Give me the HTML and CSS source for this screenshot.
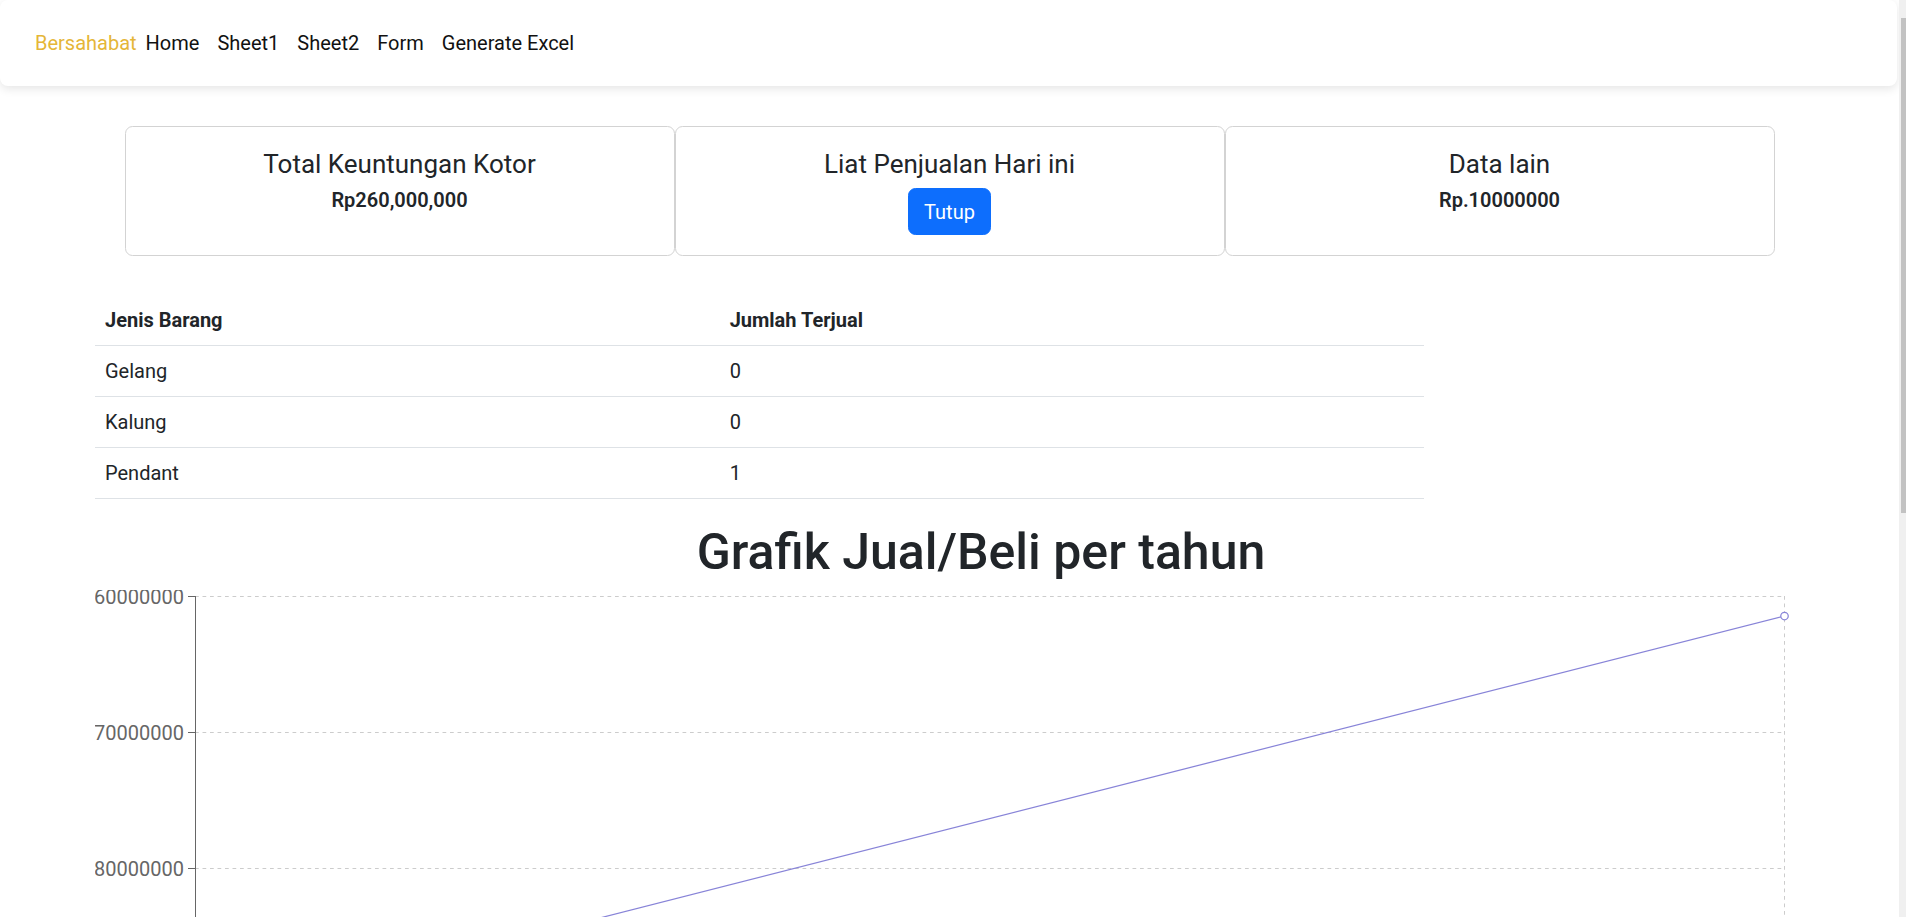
FILE: index.html
```html
<!DOCTYPE html>
<html lang="id">
<head>
<meta charset="utf-8">
<title>Bersahabat</title>
<link rel="stylesheet" href="styles.css">
</head>
<body>
<nav class="navbar">
  <a class="brand" href="#">Bersahabat</a>
  <ul class="nav-links">
    <li><a href="#">Home</a></li>
    <li><a href="#">Sheet1</a></li>
    <li><a href="#">Sheet2</a></li>
    <li><a href="#">Form</a></li>
    <li><a href="#">Generate Excel</a></li>
  </ul>
</nav>
<main class="page">
  <section class="cards">
    <div class="card">
      <h5 class="card-title">Total Keuntungan Kotor</h5>
      <h6 class="card-value">Rp260,000,000</h6>
    </div>
    <div class="card">
      <h5 class="card-title">Liat Penjualan Hari ini</h5>
      <button class="btn" type="button">Tutup</button>
    </div>
    <div class="card">
      <h5 class="card-title">Data lain</h5>
      <h6 class="card-value">Rp.10000000</h6>
    </div>
  </section>
  <section class="content">
    <table class="table">
      <thead>
        <tr><th class="col-name">Jenis Barang</th><th>Jumlah Terjual</th></tr>
      </thead>
      <tbody>
        <tr><td>Gelang</td><td>0</td></tr>
        <tr><td>Kalung</td><td>0</td></tr>
        <tr><td>Pendant</td><td>1</td></tr>
      </tbody>
    </table>
    <h1 class="chart-title">Grafik Jual/Beli per tahun</h1>
    <svg class="chart" width="1772" height="600" viewBox="0 0 1772 600">
      <g class="grid">
        <line x1="100" y1="6.5" x2="1689" y2="6.5"/>
        <line x1="100" y1="142.5" x2="1689" y2="142.5"/>
        <line x1="100" y1="278.5" x2="1689" y2="278.5"/>
        <line x1="100" y1="414.5" x2="1689" y2="414.5"/>
        <line x1="100" y1="550.5" x2="1689" y2="550.5"/>
        <line x1="100.5" y1="6" x2="100.5" y2="551"/>
        <line x1="1689.5" y1="6" x2="1689.5" y2="551"/>
      </g>
      <g class="axis">
        <line x1="100.5" y1="6" x2="100.5" y2="551"/>
        <line x1="100" y1="550.5" x2="1690" y2="550.5"/>
        <line x1="93" y1="6.5" x2="100" y2="6.5"/>
        <line x1="93" y1="142.5" x2="100" y2="142.5"/>
        <line x1="93" y1="278.5" x2="100" y2="278.5"/>
        <line x1="93" y1="414.5" x2="100" y2="414.5"/>
        <line x1="93" y1="550.5" x2="100" y2="550.5"/>
        <line x1="100.5" y1="551" x2="100.5" y2="558"/>
        <line x1="1689.5" y1="551" x2="1689.5" y2="558"/>
      </g>
      <g class="tick-labels">
        <text x="89" y="6.5" dy="0.35em" text-anchor="end">360000000</text>
        <text x="89" y="142.5" dy="0.35em" text-anchor="end">270000000</text>
        <text x="89" y="278.5" dy="0.35em" text-anchor="end">180000000</text>
        <text x="89" y="414.5" dy="0.35em" text-anchor="end">90000000</text>
        <text x="89" y="550.5" dy="0.35em" text-anchor="end">0</text>
        <text x="100" y="582" text-anchor="middle">2023</text>
        <text x="1689" y="582" text-anchor="middle">2024</text>
      </g>
      <path class="series" d="M100.5,431 L1689.5,26"/>
      <circle class="dot" cx="100.5" cy="431" r="3.75"/>
      <circle class="dot" cx="1689.5" cy="26" r="3.75"/>
    </svg>
  </section>
</main>
<div class="scroll-thumb" aria-hidden="true"></div>
</body>
</html>
```
FILE: styles.css
```css
body {
  margin: 0;
  border-right: 7px solid #f0f0f0;
  font-family: Roboto, "Noto Sans", "Liberation Sans", sans-serif;
  font-size: 20px;
  line-height: 1.5;
  color: #212529;
  background: #fff;
}

.scroll-thumb {
  position: fixed;
  top: 18px;
  right: 0;
  width: 5px;
  height: 495px;
  background: #c2c2c2;
}

a {
  text-decoration: none;
}

.navbar {
  display: flex;
  align-items: center;
  height: 86px;
  padding-left: 35px;
  margin-right: 2px;
  background: #fff;
  border-radius: 8px;
  box-shadow: 0 3px 10px rgba(0, 0, 0, 0.1);
}
.brand {
  color: #e5b638;
  line-height: 30px;
}
.nav-links {
  display: flex;
  list-style: none;
  margin: 0;
  padding: 0;
}
.nav-links a {
  display: block;
  padding: 0 9px;
  line-height: 30px;
  color: #111;
}

.page {
  padding-bottom: 510px;
}

.cards {
  display: flex;
  width: 1650px;
  margin: 40px auto 0;
}
.card {
  flex: 1;
  border: 1px solid #d3d3d3;
  border-radius: 7.5px;
  padding: 22px 20px 20px;
  text-align: center;
}
.card-title {
  margin: 0 0 9px;
  font-size: 26px;
  line-height: 30px;
  font-weight: 400;
}
.card-value {
  margin: 0;
  font-size: 20px;
  line-height: 24px;
  font-weight: 600;
}
.btn {
  font-family: inherit;
  font-size: 20px;
  line-height: 30px;
  padding: 7.5px 15px;
  color: #fff;
  background: #0d6efd;
  border: 1px solid #0d6efd;
  border-radius: 7.5px;
}

.content {
  padding: 0 32px 0 95px;
  margin-top: 39px;
}
.table {
  width: 75%;
  border-collapse: collapse;
  margin-bottom: 23px;
}
.table th,
.table td {
  padding: 10px;
  line-height: 30px;
  text-align: left;
  border-bottom: 1px solid #dee2e6;
}
.table th {
  font-weight: 700;
}
.col-name {
  width: 47%;
}

.chart-title {
  margin: 0 0 8px;
  font-size: 50px;
  line-height: 60px;
  font-weight: 500;
  text-align: center;
}
.chart {
  display: block;
}
.grid line {
  stroke: #ccc;
  stroke-dasharray: 3.75 3.75;
}
.axis line {
  stroke: #666;
}
.tick-labels text {
  fill: #666;
  font-size: 20px;
  font-family: Roboto, "Noto Sans", sans-serif;
}
.series {
  fill: none;
  stroke: #8884d8;
  stroke-width: 1.25;
}
.dot {
  fill: #fff;
  stroke: #8884d8;
  stroke-width: 1.25;
}
```
